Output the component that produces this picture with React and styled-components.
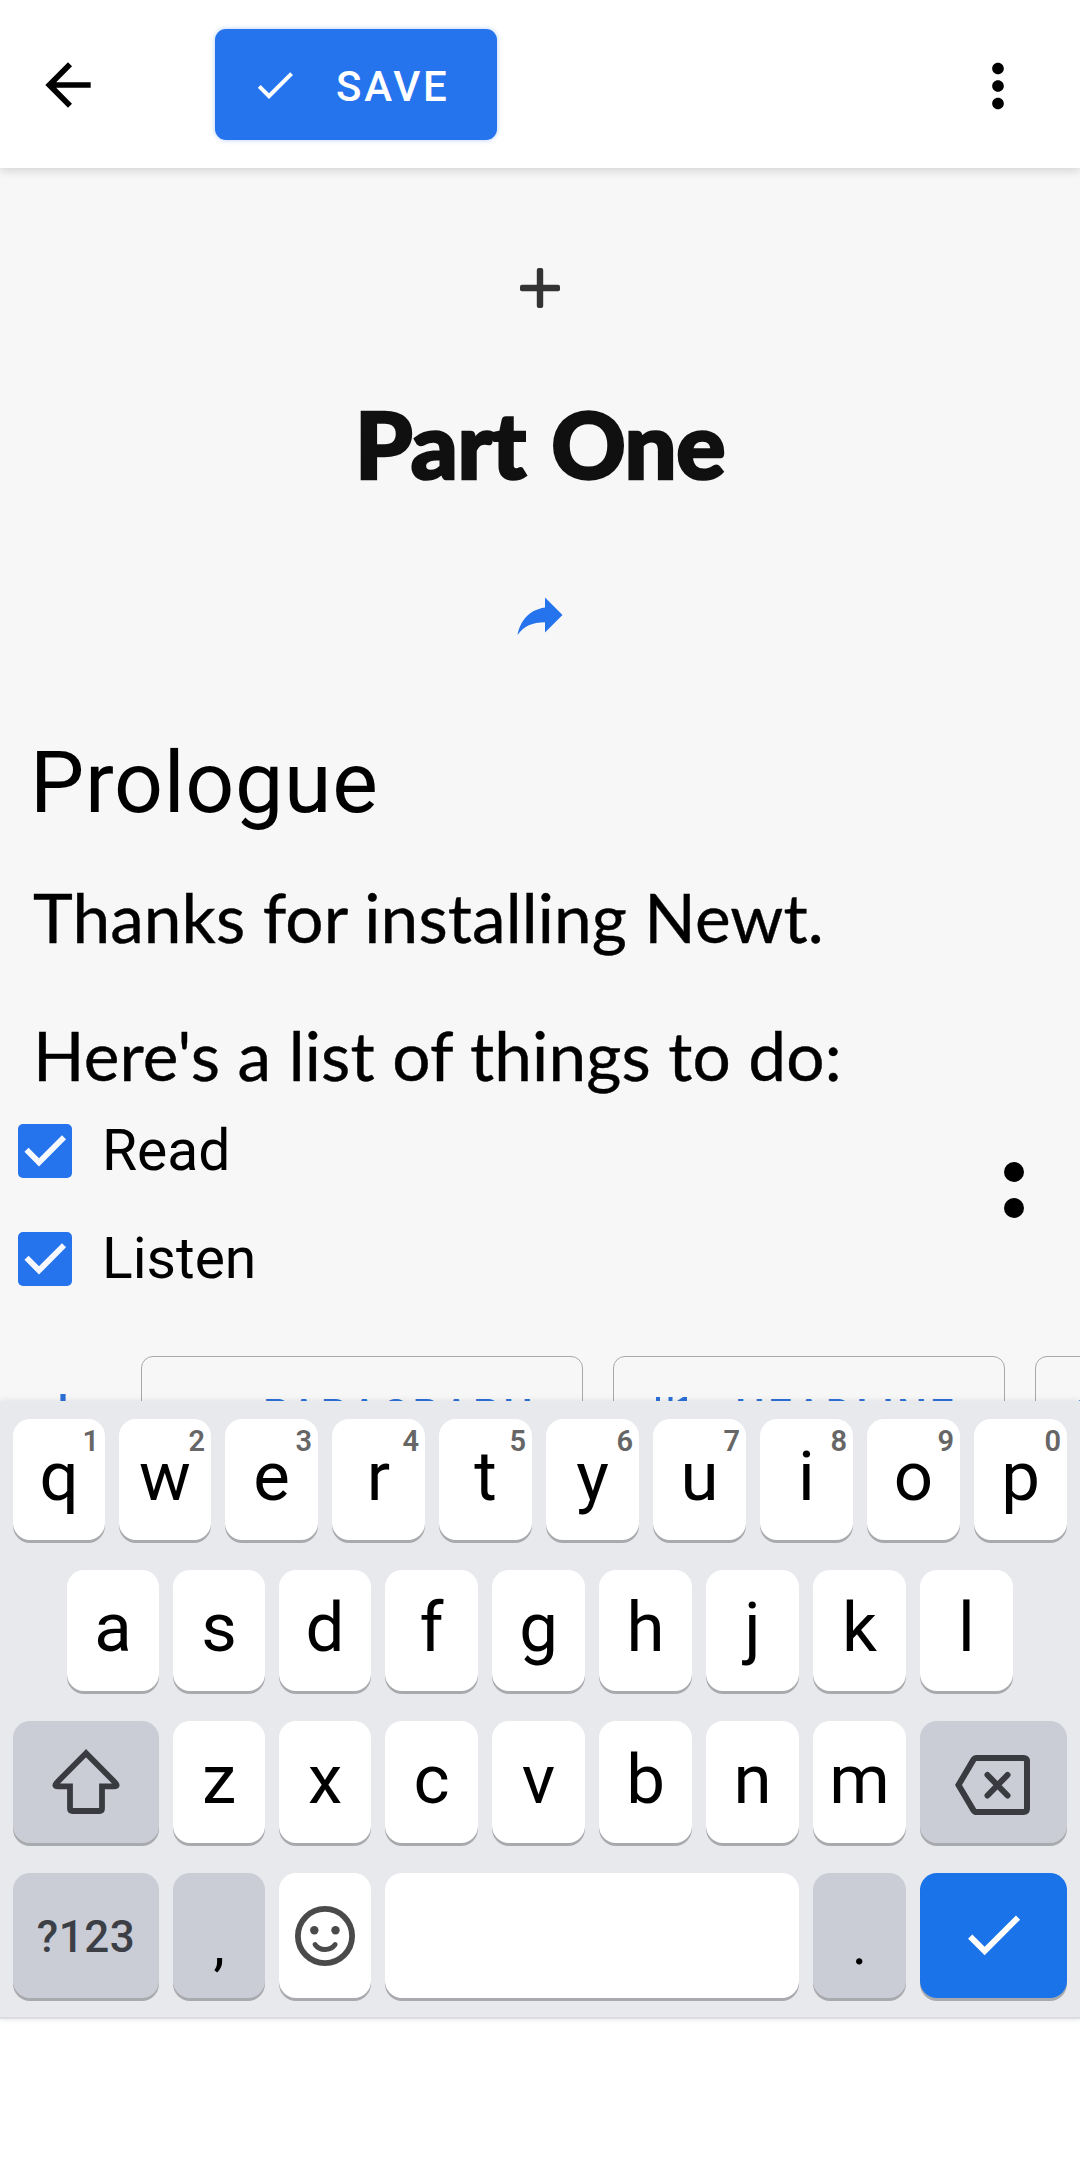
import React from "react";
import styled, { createGlobalStyle } from "styled-components";

const GlobalStyle = createGlobalStyle`
  * { box-sizing: border-box; }
  html, body { margin: 0; padding: 0; background: #fff; }
  body { font-family: Roboto, "Liberation Sans", sans-serif; color: #000; }
  svg { display: block; flex: none; }
`;

const Screen = styled.div`
  display: flex;
  flex-direction: column;
  width: 1080px;
  height: 2160px;
  overflow: hidden;
  background: #fff;
`;

const TopBar = styled.header`
  display: flex;
  align-items: center;
  flex: none;
  height: 168px;
  padding: 1px 47px 0 34px;
  background: #fff;
  box-shadow: 0 2px 10px rgba(0, 0, 0, 0.16);
  z-index: 1;
`;

const IconButton = styled.button`
  display: flex;
  padding: ${(p) => p.$drop || 0}px 0 0;
  border: 0;
  background: none;
  color: ${(p) => p.$color || "#000"};
`;

const SaveButton = styled.button`
  display: flex;
  align-items: center;
  gap: 37px;
  width: 282px;
  height: 111px;
  margin: 0 auto 0 113px;
  padding: 1px 0 0 36px;
  border: 0;
  border-radius: 11px;
  background: #2574ee;
  box-shadow: 0 0 5px rgba(37, 116, 238, 0.35);
  color: #fff;
  font: 500 42px/50px Roboto, "Liberation Sans", sans-serif;
  letter-spacing: 2.8px;
`;

const SaveLabel = styled.span`
  padding-top: 4px;
`;

const Editor = styled.main`
  display: flex;
  flex-direction: column;
  flex: none;
  height: 1233px;
  padding-top: 100px;
  overflow: hidden;
  background: #f7f7f7;
`;

const Centered = styled.div`
  display: flex;
  justify-content: center;
  flex: none;
  margin-top: ${(p) => p.$top || 0}px;
`;

const PartTitle = styled.h1`
  flex: none;
  margin: 86px 0 0;
  color: #101010;
  font: 900 92px/100px Lato, "Open Sans", sans-serif;
  text-align: center;
  letter-spacing: -0.5px;
  word-spacing: 4px;
  -webkit-text-stroke: 2.6px #101010;
`;

const Heading = styled.h2`
  flex: none;
  margin: 88px 0 0 30px;
  font-size: 86px;
  font-weight: 400;
  line-height: 100px;
  letter-spacing: 0.7px;
`;

const Paragraph = styled.p`
  flex: none;
  margin: ${(p) => p.$top}px 0 0 33px;
  font: 400 67.5px/100px Lato, "Open Sans", sans-serif;
  letter-spacing: ${(p) => p.$spacing}px;
  white-space: nowrap;
  -webkit-text-stroke: 0.4px #000;
`;

const ListBlock = styled.section`
  display: flex;
  justify-content: space-between;
  flex: none;
  padding: 0 56px 0 18px;
`;

const CheckList = styled.ul`
  display: grid;
  gap: 16px;
  margin: 0;
  padding: 0;
  list-style: none;
`;

const CheckItem = styled.li`
  display: flex;
  align-items: center;
  gap: 30px;
  height: 92px;
  font-size: 57px;
  line-height: 70px;
`;

const CheckBox = styled.span`
  display: flex;
  width: 54px;
  height: 54px;
  border-radius: 5px;
  background: #2574ee;
`;

const DragHandle = styled.div`
  display: grid;
  align-content: start;
  gap: 16px;
  padding-top: 57px;
`;

const Dot = styled.span`
  width: 20px;
  height: 20px;
  border-radius: 50%;
  background: #000;
`;

const BlockBar = styled.nav`
  display: flex;
  align-items: center;
  flex: none;
  gap: 30px;
  height: 113px;
  margin-top: 51px;
  padding-left: 43px;
  color: #2a6fd8;
`;

const BlockButton = styled.button`
  display: flex;
  align-items: center;
  flex: none;
  width: ${(p) => p.$width}px;
  height: 113px;
  padding: 1px 0 0 ${(p) => p.$inset}px;
  gap: ${(p) => p.$gap}px;
  border: 1px solid #a8a8a8;
  border-radius: 12px;
  background: transparent;
  color: inherit;
  font: 500 42px/50px Roboto, "Liberation Sans", sans-serif;
  letter-spacing: 3.1px;
`;

const BlockLabel = styled.span`
  padding-top: 4px;
`;

const AddSlot = styled.div`
  flex: none;
  width: 68px;
`;

const Keyboard = styled.section`
  display: flex;
  flex-direction: column;
  flex: none;
  height: 618px;
  padding: 18px 13px 0;
  gap: 30px;
  background: #e8e9ed;
  border-bottom: 2px solid #dcdde0;
  box-shadow: 0 0 6px rgba(60, 64, 72, 0.14);
  z-index: 1;
`;

const KeyRow = styled.div`
  display: flex;
  flex: none;
  gap: 14px;
  padding: 0 ${(p) => p.$inset || 0}px;
  height: ${(p) => p.$height}px;
`;

const tones = { light: "#fff", dark: "#cbcdd6", action: "#1a73e8" };

const Key = styled.button`
  position: relative;
  display: flex;
  align-items: center;
  justify-content: center;
  flex: ${(p) => (p.$width ? `0 0 ${p.$width}px` : "1 1 0")};
  min-width: 0;
  height: 100%;
  padding: ${(p) => p.$drop || 0}px 0 ${(p) => p.$lift || 0}px;
  border: 0;
  border-radius: 17px;
  background: ${(p) => tones[p.$tone || "light"]};
  box-shadow: 0 3px 0 #a9aaad;
  color: ${(p) => p.$color || "#000"};
  font: 400 ${(p) => p.$size || 69}px/56px Roboto, "Liberation Sans", sans-serif;
`;

const KeyHint = styled.span`
  position: absolute;
  top: 8px;
  right: 6px;
  color: #666;
  font-size: 29px;
  font-weight: 600;
  line-height: 29px;
`;

const ModeLabel = styled.span`
  font-size: 44px;
  font-weight: 500;
  letter-spacing: 0.5px;
  line-height: 50px;
`;

const CHECK = "M9 16.17L4.83 12l-1.42 1.41L9 19 21 7l-1.41-1.41z";

const Glyph = ({ d, size }) => (
  <svg width={size} height={size} viewBox="0 0 24 24" fill="currentColor">
    <path d={d} />
  </svg>
);

const PlusIcon = () => (
  <svg width="40" height="40" viewBox="0 0 40 40" fill="currentColor">
    <rect x="16.8" width="6.4" height="40" rx="2" />
    <rect y="16.8" width="40" height="6.4" rx="2" />
  </svg>
);

const BarPlusIcon = () => (
  <svg width="40" height="40" viewBox="0 0 40 40" fill="currentColor">
    <path d="M17.4 1h5.2v16.4H40v5.2H22.6V40h-5.2V22.6H0v-5.2h17.4z" />
  </svg>
);

const TickMark = () => (
  <svg width="54" height="54" viewBox="0 0 54 54" fill="none">
    <path d="M8.5 25.8L21 38.4L46 13.3" stroke="#f7f9ff" strokeWidth="5.8" />
  </svg>
);

const ParagraphIcon = () => (
  <svg width="48" height="48" viewBox="0 0 48 48" fill="currentColor">
    <path d="M6 14h36v4H6zM6 24h36v4H6zM6 34h24v4H6z" />
  </svg>
);

const HeadlineIcon = () => (
  <svg width="32" height="34" viewBox="0 0 32 34" fill="currentColor">
    <path d="M0 1h4v13h8.5V1h4v33h-4V18H4v16H0zM31 1v33h-4V6l-6 2.4V5l6-4z" />
  </svg>
);

const QuoteIcon = () => (
  <svg width="34" height="30" viewBox="0 0 34 30" fill="currentColor">
    <path d="M12 0C4 3 0 9 0 18c0 7 3 12 8 12s7-3 7-7-3-7-7-7c0-6 2-10 6-13zM30 0c-8 3-12 9-12 18 0 7 3 12 8 12s7-3 7-7-3-7-7-7c0-6 2-10 6-13z" />
  </svg>
);

const ShiftIcon = () => (
  <svg width="68" height="66" viewBox="0 0 68 66" fill="none" stroke="currentColor" strokeWidth="5.8">
    <path d="M34 5.2L5.2 34.2C2.2 37.3 3 38.3 6 38.3H18V60.5C18 62.3 18.8 63 20.5 63H47.5C49.2 63 50 62.3 50 60.5V38.3H62C65 38.3 65.8 37.3 62.8 34.2Z" />
  </svg>
);

const BackspaceIcon = () => (
  <svg width="78" height="60" viewBox="0 0 78 60" fill="none" stroke="currentColor" strokeWidth="6">
    <path d="M21.5 3H68.5Q72 3 72 6.5V53.5Q72 57 68.5 57H21.5Q19.6 57 18.5 55.3L3.5 30L18.5 4.7Q19.6 3 21.5 3Z" />
    <path d="M32.5 20L52.5 40.5M52.5 20L32.5 40.5" strokeLinecap="round" />
  </svg>
);

const SmileyIcon = () => (
  <svg width="60" height="60" viewBox="0 0 60 60" fill="none">
    <circle cx="30" cy="30" r="27.1" stroke="currentColor" strokeWidth="5.8" />
    <circle cx="19.3" cy="24.3" r="4.2" fill="currentColor" />
    <circle cx="40.5" cy="24.3" r="4.2" fill="currentColor" />
    <path d="M20 38.5Q23.5 43.5 30 43.5T40.2 38.5" stroke="currentColor" strokeWidth="4.8" strokeLinecap="round" />
  </svg>
);

const topKeys = "qwertyuiop".split("");
const homeKeys = "asdfghjkl".split("");
const lowerKeys = "zxcvbnm".split("");

export default function App() {
  return (
    <Screen>
      <GlobalStyle />
      <TopBar>
        <IconButton aria-label="Back" $drop={1}>
          <Glyph size={68} d="M20 11H7.83l5.59-5.59L12 4l-8 8 8 8 1.41-1.41L7.83 13H20v-2z" />
        </IconButton>
        <SaveButton>
          <Glyph size={48} d={CHECK} />
          <SaveLabel>SAVE</SaveLabel>
        </SaveButton>
        <IconButton aria-label="More" $drop={3}>
          <Glyph
            size={70}
            d="M12 8c1.1 0 2-.9 2-2s-.9-2-2-2-2 .9-2 2 .9 2 2 2zm0 2c-1.1 0-2 .9-2 2s.9 2 2 2 2-.9 2-2-.9-2-2-2zm0 6c-1.1 0-2 .9-2 2s.9 2 2 2 2-.9 2-2-.9-2-2-2z"
          />
        </IconButton>
      </TopBar>

      <Editor>
        <Centered>
          <IconButton $color="#333" aria-label="Add">
            <PlusIcon />
          </IconButton>
        </Centered>
        <PartTitle>Part One</PartTitle>
        <Centered $top={91}>
          <IconButton $color="#2574ee" aria-label="Forward">
            <Glyph size={60} d="M14 5l7 7-7 7v-4.1c-5 0-8.5 1.6-11 5.1 1-5 4-10 11-11V5z" />
          </IconButton>
        </Centered>
        <Heading>Prologue</Heading>
        <Paragraph $top={34} $spacing={0.1}>Thanks for installing Newt.</Paragraph>
        <Paragraph $top={38} $spacing={0.15}>Here's a list of things to do:</Paragraph>
        <ListBlock>
          <CheckList>
            {["Read", "Listen"].map((label) => (
              <CheckItem key={label}>
                <CheckBox>
                  <TickMark />
                </CheckBox>
                {label}
              </CheckItem>
            ))}
          </CheckList>
          <DragHandle>
            <Dot />
            <Dot />
          </DragHandle>
        </ListBlock>
        <BlockBar>
          <AddSlot>
            <BarPlusIcon />
          </AddSlot>
          <BlockButton $width={442} $inset={36} $gap={37}>
            <ParagraphIcon />
            <BlockLabel>PARAGRAPH</BlockLabel>
          </BlockButton>
          <BlockButton $width={392} $inset={42} $gap={47}>
            <HeadlineIcon />
            <BlockLabel>HEADLINE</BlockLabel>
          </BlockButton>
          <BlockButton $width={320} $inset={36} $gap={36}>
            <QuoteIcon />
          </BlockButton>
        </BlockBar>
      </Editor>

      <Keyboard>
        <KeyRow $height={120.5}>
          {topKeys.map((k, i) => (
            <Key key={k} $width={i < 2 ? 92 : 93} $lift={4}>
              {k}
              <KeyHint>{(i + 1) % 10}</KeyHint>
            </Key>
          ))}
        </KeyRow>
        <KeyRow $height={121.5} $inset={54}>
          {homeKeys.map((k, i) => (
            <Key key={k} $width={i < 3 ? 92 : 93} $lift={4}>{k}</Key>
          ))}
        </KeyRow>
        <KeyRow $height={122}>
          <Key $width={146} $tone="dark" $color="#3a3b40" aria-label="Shift" $lift={2}>
            <ShiftIcon />
          </Key>
          {lowerKeys.map((k, i) => (
            <Key key={k} $width={i < 2 ? 92 : 93} $lift={4}>{k}</Key>
          ))}
          <Key $width={147} $tone="dark" $color="#3a3b40" aria-label="Backspace" $drop={6}>
            <BackspaceIcon />
          </Key>
        </KeyRow>
        <KeyRow $height={125}>
          <Key $width={146} $tone="dark" $color="#3d3f46" $drop={2}>
            <ModeLabel>?123</ModeLabel>
          </Key>
          <Key $width={92} $tone="dark" $size={57} $drop={19}>,</Key>
          <Key $width={92} $color="#4a4a4a" aria-label="Emoji">
            <SmileyIcon />
          </Key>
          <Key aria-label="Space" />
          <Key $width={93} $tone="dark" $size={57} $drop={19}>.</Key>
          <Key $width={147} $tone="action" $color="#fff" aria-label="Done" $lift={2}>
            <Glyph size={71} d={CHECK} />
          </Key>
        </KeyRow>
      </Keyboard>
    </Screen>
  );
}
